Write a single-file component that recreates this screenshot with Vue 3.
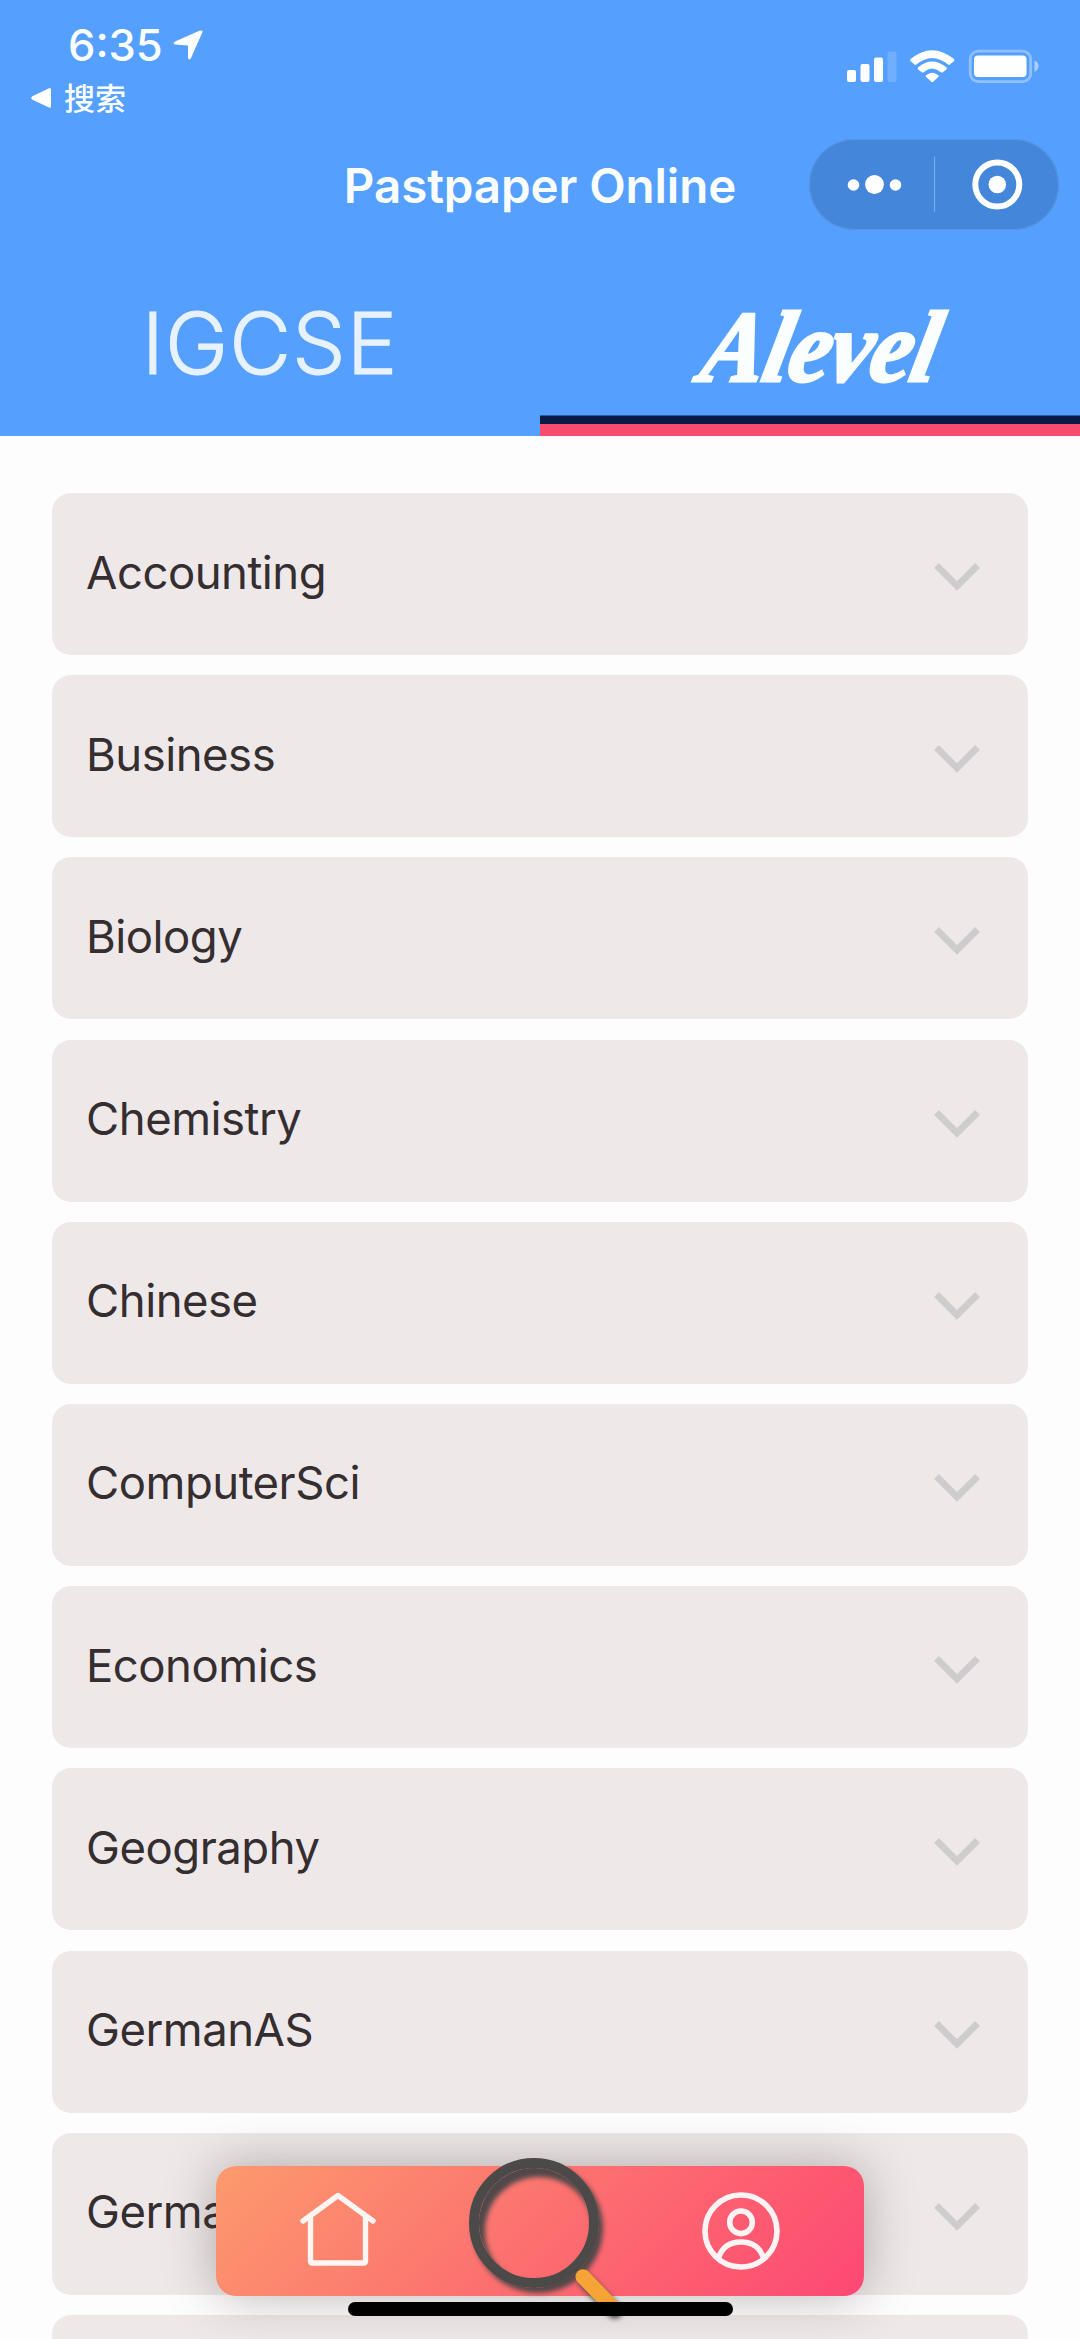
<script setup>
const subjects = [
  'Accounting', 'Business', 'Biology', 'Chemistry', 'Chinese', 'ComputerSci',
  'Economics', 'Geography', 'GermanAS', 'GermanAL'
]
</script>

<template>
  <div class="page">
    <header class="header">
      <div class="status">
        <div class="status-left">
          <div class="clock">
            <span class="time">6:35</span>
            <svg class="arrow" width="30" height="31" viewBox="0 0 30 31">
              <path d="M29.300 2.500 18 28Q16 31 15 28V15.500L2 14.500Q-.8 13.500 2 11.500L27 .6Q30.500 0 29.300 2.500Z" fill="#fff" />
            </svg>
          </div>
          <div class="back">
            <svg width="21" height="22" viewBox="0 0 21 22">
              <path d="M1 9.500 18 1.200Q20 .6 20 3V19Q20 21.400 18 20.600L1 12.500Q-.5 11 1 9.500Z" fill="#fff" />
            </svg>
            <span class="back-text">搜索</span>
          </div>
        </div>
        <svg class="indicators" width="196" height="40" viewBox="0 0 196 40">
          <g fill="#fff">
            <rect x="3" y="23" width="9" height="12" rx="2" />
            <rect x="16.500" y="17" width="9" height="18" rx="2" />
            <rect x="30" y="10.500" width="9" height="24.500" rx="2" />
            <rect x="43.500" y="4.500" width="9" height="30.500" rx="2" opacity=".17" />
            <path d="M66.800 11.800Q88 -5.500 109.700 11.800Q111 13 109.800 14.300L106 17.500Q105 18.300 104 17.500Q88 4.500 72.500 17.500Q71.500 18.300 70.500 17.500L66.700 14.300Q65.500 13 66.800 11.800Z" />
            <path d="M74.200 20.300Q88 8.500 102.300 20.300Q103.500 21.400 102.300 22.500L98.800 25.200Q97.800 26 96.800 25.200Q88 18 79.700 25.200Q78.700 26 77.700 25.200L74.200 22.500Q73 21.400 74.200 20.300Z" />
            <path d="M82 28.200Q88 23.200 94.500 28.200Q95.300 29 94.500 29.800L89.300 34.700Q88.300 35.500 87.300 34.700L82 29.800Q81.200 29 82 28.200Z" />
            <rect x="130" y="8.500" width="52.500" height="21.500" rx="4" />
            <path d="M190.500 13.500Q194.500 15 194.500 19T190.500 25Z" opacity=".5" />
          </g>
          <rect x="126.200" y="4.200" width="60.500" height="30.500" rx="8" fill="none" stroke="#fff" stroke-width="2.800" opacity=".35" />
        </svg>
      </div>

      <div class="titlebar">
        <h1 class="title">Pastpaper Online</h1>
        <div class="capsule">
          <svg width="250" height="91" viewBox="0 0 250 91">
            <g fill="#fff">
              <circle cx="44.500" cy="46" r="5.800" />
              <circle cx="65.500" cy="45.500" r="9.400" />
              <circle cx="86.500" cy="46" r="5.800" />
              <circle cx="188.300" cy="45.500" r="8.800" />
            </g>
            <circle cx="188.300" cy="45.500" r="22" fill="none" stroke="#fff" stroke-width="6" />
            <path d="M125.500 17.500V73" stroke="#76aae9" stroke-width="1.200" />
          </svg>
        </div>
      </div>

      <nav class="tabs">
        <div class="tab"><span class="igcse">IGCSE</span></div>
        <div class="tab active"><span class="alevel">Alevel</span></div>
      </nav>
    </header>

    <main class="list">
      <section v-for="s in subjects" :key="s" class="card">
        <span class="name">{{ s }}</span>
        <svg class="chev" width="48" height="32" viewBox="0 0 48 32">
          <path d="M3.500 4.500 24 25 44.500 4.500" fill="none" stroke="#cfcccd" stroke-width="6.800" />
        </svg>
      </section>
      <section class="card"></section>
    </main>

    <nav class="dock">
      <svg class="home" width="78" height="76" viewBox="0 0 78 76" fill="none" stroke="#fff6f3" stroke-width="5.400" stroke-linecap="round" stroke-linejoin="round">
        <path d="M4 29 39 3.500 74 29" />
        <path d="M11.500 24.500V69Q11.500 71 13.500 71H64.500Q66.500 71 66.500 69V24.500" />
      </svg>
      <svg class="user" width="78" height="78" viewBox="0 0 78 78" fill="none" stroke="#fff3f4" stroke-width="5.600">
        <circle cx="39" cy="39" r="36" />
        <circle cx="39" cy="30.300" r="11.300" />
        <path d="M16.500 66C20 55 28.500 50 39 50S58 55 61.500 66" />
      </svg>
    </nav>
    <div class="lens"></div>
    <div class="handle"></div>
    <div class="indicator"></div>
  </div>
</template>

<style>
body { margin: 0; background: #fefdfe; }
</style>

<style scoped>
.page {
  position: relative;
  width: 1080px;
  height: 2339px;
  overflow: hidden;
  background: #fefdfe;
  font-family: Inter, "Noto Sans CJK SC", sans-serif;
}
.header {
  display: flex;
  flex-direction: column;
  height: 436px;
  background: #559ffe;
  color: #fafeff;
}
.status {
  display: flex;
  justify-content: space-between;
  height: 139px;
  box-sizing: border-box;
  padding: 20px 40px 0 31px;
}
.clock { display: flex; height: 52px; margin-left: 37px; }
.time { width: 105px; font-size: 43.500px; line-height: 51px; font-weight: 500; white-space: nowrap; }
.arrow { margin-top: 10px; }
.back { display: flex; align-items: center; gap: 12px; height: 52px; }
.back-text { font: 500 31px/48px "Noto Sans CJK SC", sans-serif; margin-top: -2px; }
.indicators { margin: 27px 0 0; flex: none; }
.titlebar {
  display: grid;
  grid-template-columns: 1fr auto 1fr;
  height: 91px;
  padding-right: 21px;
  padding-left: 21px;
}
.title {
  grid-column: 2;
  margin: 0;
  font-size: 47.500px;
  line-height: 93px;
  font-weight: 600;
  letter-spacing: -.1px;
  white-space: nowrap;
}
.capsule {
  justify-self: end;
  width: 250px;
  height: 91px;
  border-radius: 46px;
  background: #4487da;
  box-shadow: inset 0 0 0 1px #5995e2;
}
.tabs { display: flex; flex: 1; }
.tab {
  display: flex;
  width: 540px;
  box-sizing: border-box;
  justify-content: center;
  align-items: center;
}
.tab.active { border-bottom: 12px solid #f84c6e; box-shadow: inset 0 -8.500px #071c45; }
.igcse {
  margin-top: 22px;
  font-size: 85px;
  line-height: 100px;
  font-weight: 300;
  letter-spacing: 1px;
  color: #e8f2fe;
  -webkit-text-stroke: 1px #e8f2fe;
}
.alevel {
  margin: 39px 0 0 24px;
  font: italic 700 101px/100px "Liberation Serif", serif;
  letter-spacing: -1px;
  -webkit-text-stroke: 3px #fafeff;
  transform: skewX(-12deg) scaleX(.93);
}
.list {
  display: flex;
  flex-direction: column;
  gap: 20.200px;
  padding: 57px 52px 0;
}
.card {
  display: flex;
  flex: none;
  justify-content: space-between;
  align-items: center;
  box-sizing: border-box;
  height: 162px;
  padding: 0 47px 0 34px;
  border-radius: 19px;
  background: #eee8e9;
}
.name { font-size: 45.500px; line-height: 60px; font-weight: 400; letter-spacing: -.5px; color: #352e30; margin-top: -3px; }
.chev { margin-top: 6px; }
.dock {
  position: absolute;
  left: 216px;
  top: 2166px;
  display: flex;
  justify-content: space-between;
  box-sizing: border-box;
  width: 648px;
  height: 129.500px;
  padding: 26px 84px 0 83px;
  border-radius: 20px;
  background: linear-gradient(135deg, #fc9a6e 0%, #fc746f 45%, #fd6170 68%, #fd4874 100%);
  box-shadow: 0 0 50px rgba(70, 55, 50, .36);
}
.lens {
  position: absolute;
  left: 469px;
  top: 2158px;
  box-sizing: border-box;
  width: 130px;
  height: 130px;
  border: 10px solid #4b4a48;
  border-radius: 50%;
  box-shadow: inset 5px 8px 5px 1px #50484a, 4px 5px 5px #50484a;
}
.handle {
  position: absolute;
  left: 576px;
  top: 2269px;
  width: 58px;
  height: 15px;
  border-radius: 8px;
  background: #f6a436;
  transform: rotate(46deg);
  transform-origin: 7px 7px;
  box-shadow: 4px 1px 5px #50484a;
}
.indicator {
  position: absolute;
  left: 348px;
  top: 2302px;
  width: 385px;
  height: 14px;
  border-radius: 7px;
  background: #000;
}
</style>
